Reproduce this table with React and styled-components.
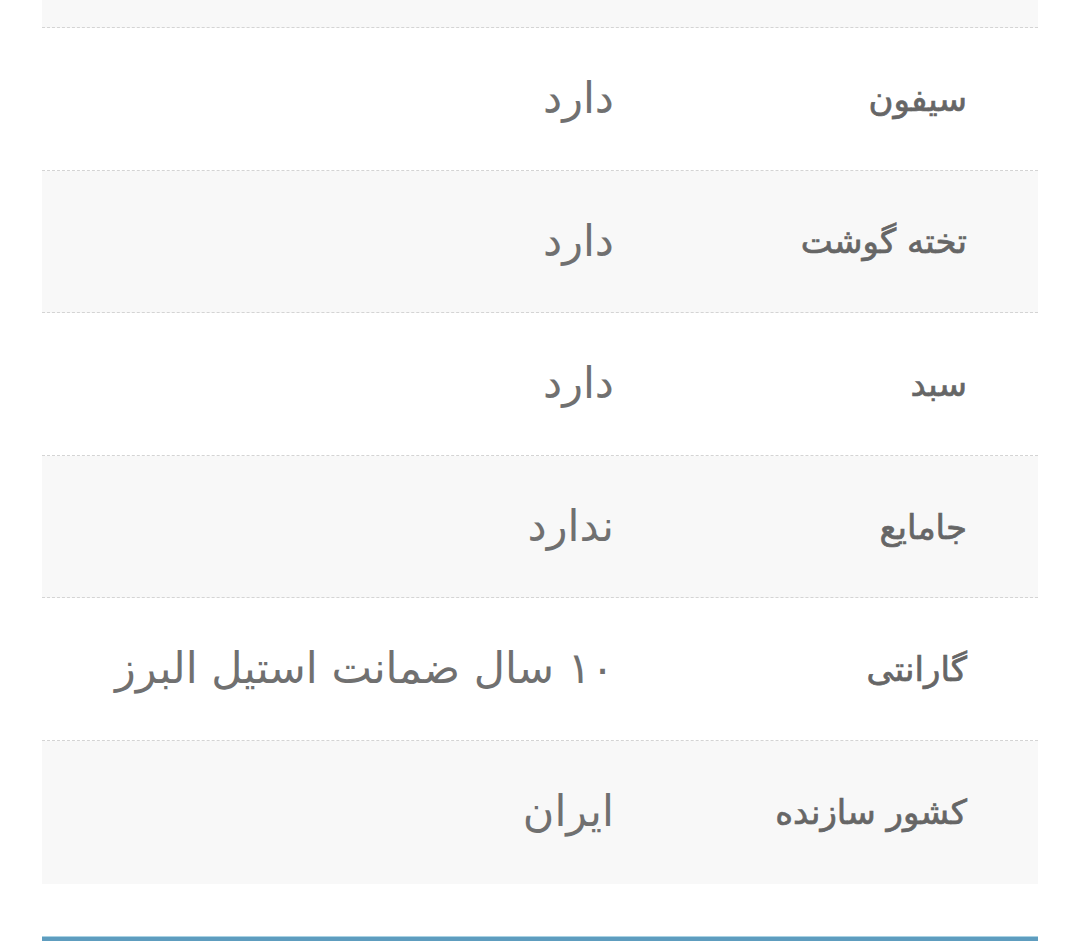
import React from "react";
import styled, { createGlobalStyle } from "styled-components";

const Global = createGlobalStyle`
  html, body { margin: 0; padding: 0; background: #fff; }
  body { font-family: "DejaVu Sans", "Noto Sans", sans-serif; }
`;

const Page = styled.div`
  width: 1080px;
  height: 941px;
  overflow: hidden;
  padding: 0 42px;
  box-sizing: border-box;
  direction: rtl;
  display: flex;
  flex-direction: column;
`;

const Table = styled.div`
  display: flex;
  flex-direction: column;
`;

const Stub = styled.div`
  height: 28px;
  box-sizing: border-box;
  background: #f8f8f8;
  border-bottom: 1px dashed #d4d4d4;
`;

const Row = styled.div`
  display: grid;
  grid-template-columns: 424px 1fr;
  align-items: center;
  height: 142.6px;
  box-sizing: border-box;
  background: ${(p) => (p.$shade ? "#f8f8f8" : "#ffffff")};
  border-bottom: ${(p) => (p.$last ? "none" : "1px dashed #d4d4d4")};
`;

const Label = styled.div`
  padding-right: 71px;
  font-size: 34px;
  font-weight: 400;
  -webkit-text-stroke: 0.7px #666;
  color: #666666;
  text-align: right;
`;

const Value = styled.div`
  font-size: 43px;
  font-weight: 400;
  color: #707070;
  text-align: right;
  line-height: 1.2;
`;

const Spacer = styled.div`
  flex: 1;
`;

const BlueBar = styled.div`
  height: 5px;
  background: #5e9dbf;
  border-top: 1px solid #a9d2e3;
  box-sizing: border-box;
`;

const rows = [
  ["سیفون", "دارد"],
  ["تخته گوشت", "دارد"],
  ["سبد", "دارد"],
  ["جامایع", "ندارد"],
  ["گارانتی", "۱۰ سال ضمانت استیل البرز"],
  ["کشور سازنده", "ایران"],
];

export default function App() {
  return (
    <>
      <Global />
      <Page>
        <Table>
          <Stub />
          {rows.map(([l, v], i) => (
            <Row key={l} $shade={i % 2 === 1} $last={i === rows.length - 1}>
              <Label>{l}</Label>
              <Value>{v}</Value>
            </Row>
          ))}
        </Table>
        <Spacer />
        <BlueBar />
      </Page>
    </>
  );
}
